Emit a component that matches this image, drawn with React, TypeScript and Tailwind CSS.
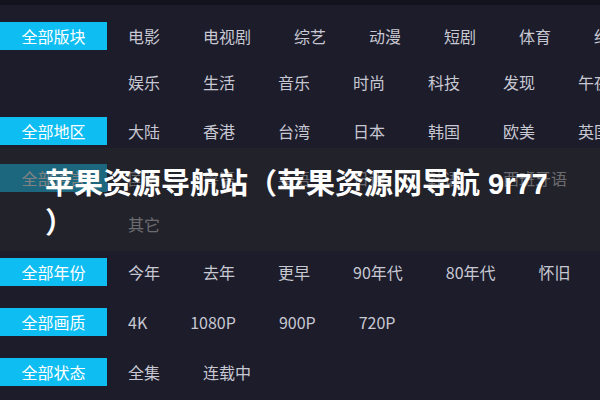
const rows: { label?: string; lines: string[][]; mt: string }[] = [
  {
    label: "全部版块",
    mt: "mt-[8px]",
    lines: [
      ["电影", "电视剧", "综艺", "动漫", "短剧", "体育", "纪录片"],
      ["娱乐", "生活", "音乐", "时尚", "科技", "发现", "午夜"],
    ],
  },
  {
    label: "全部地区",
    mt: "mt-[3px]",
    lines: [["大陆", "香港", "台湾", "日本", "韩国", "欧美", "英国", "泰国"]],
  },
  {
    label: "全部语言",
    mt: "mt-[1px]",
    lines: [["国语", "粤语", "英语", "日语", "韩语", "西班牙语", "法语"], ["其它"]],
  },
  {
    label: "全部年份",
    mt: "mt-[2px]",
    lines: [["今年", "去年", "更早", "90年代", "80年代", "怀旧"]],
  },
  {
    label: "全部画质",
    mt: "mt-[4px]",
    lines: [["4K", "1080P", "900P", "720P"]],
  },
  {
    label: "全部状态",
    mt: "mt-[4px]",
    lines: [["全集", "连载中"]],
  },
];

function FilterRow({ label, lines, mt }: { label?: string; lines: string[][]; mt: string }) {
  return (
    <div className={`flex ${mt}`}>
      <div className="w-[107px] shrink-0">
        {label && (
          <div className="mt-[9px] h-[28px] bg-[#0ebef2] text-white text-[16px] leading-[28px] text-center">
            {label}
          </div>
        )}
      </div>
      <div className="flex-1 min-w-0 overflow-hidden pl-[21px]">
        {lines.map((line, i) => (
          <div key={i} className="flex gap-[43px] h-[46px] items-center whitespace-nowrap">
            {line.map((item) => (
              <span key={item} className="text-[16px] text-[#c8c8d2] shrink-0">
                {item}
              </span>
            ))}
          </div>
        ))}
      </div>
    </div>
  );
}

export default function App() {
  return (
    <div
      className="relative w-[600px] h-[400px] overflow-hidden bg-[#1c1c2b]"
      style={{ fontFamily: '"Noto Sans CJK SC", "Noto Sans", sans-serif' }}
    >
      <div className="h-[5px] bg-[#13131d]" />
      <div className="flex flex-col">
        {rows.map((r, i) => (
          <FilterRow key={i} {...r} />
        ))}
      </div>

      <div className="absolute left-0 right-0 top-[148px] h-[103px] bg-[rgba(40,40,42,0.58)] pl-[45px] pr-[45px] pt-[17px]">
        <h1
          className="text-white text-[29px] font-bold leading-[39px] [line-break:anywhere]"
          style={{ fontFamily: '"Liberation Sans", "Noto Sans CJK SC", sans-serif' }}
        >
          苹果资源导航站（苹果资源网导航 9r77）
        </h1>
      </div>
    </div>
  );
}
